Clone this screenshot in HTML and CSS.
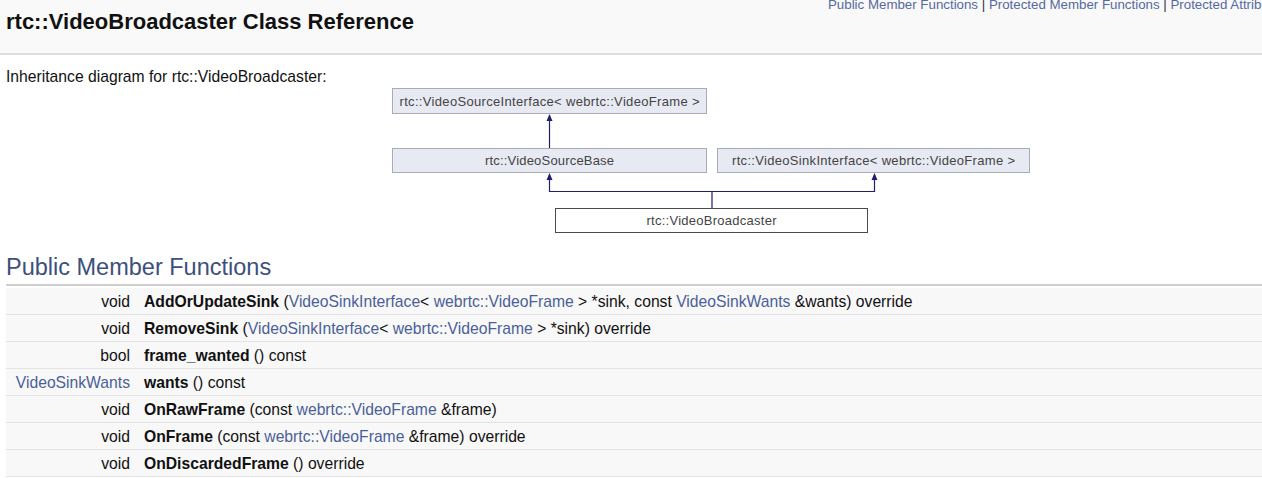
FILE: index.html
```html
<!DOCTYPE html>
<html lang="en">
<head>
<meta charset="utf-8">
<title>rtc::VideoBroadcaster Class Reference</title>
<link rel="stylesheet" href="styles.css">
</head>
<body>
<div class="header">
  <div class="headertitle"><div class="title">rtc::VideoBroadcaster Class Reference</div></div>
  <div class="summary"><a class="el">Public Member Functions</a> | <a class="el">Protected Member Functions</a> | <a class="el">Protected Attributes</a></div>
</div>
<div class="contents">
  <p class="inherit-label">Inheritance diagram for rtc::VideoBroadcaster:</p>
  <div class="diagram">
    <svg width="660" height="158" viewBox="386 86 660 158" xmlns="http://www.w3.org/2000/svg">
      <g class="box">
        <rect x="392.5" y="88.5" width="314" height="25"/>
        <rect x="392.5" y="148.5" width="314" height="24"/>
        <rect x="717.5" y="148.5" width="312" height="24"/>
      </g>
      <rect class="box-self" x="555.5" y="208.5" width="312" height="24"/>
      <g class="edges">
        <path d="M549.5 148 V120"/>
        <path d="M712 208 V191.5 M549 191.5 H875 M549.5 192 V179 M874.5 192 V179"/>
      </g>
      <g class="heads">
        <polygon points="549.5,114 546.5,121 552.5,121"/>
        <polygon points="549.5,173 546.5,180 552.5,180"/>
        <polygon points="874.5,173 871.5,180 877.5,180"/>
      </g>
      <g class="labels">
        <text x="549.5" y="105.5" textLength="300" lengthAdjust="spacing">rtc::VideoSourceInterface&lt; webrtc::VideoFrame &gt;</text>
        <text x="549.5" y="165" textLength="129" lengthAdjust="spacing">rtc::VideoSourceBase</text>
        <text x="873.5" y="165" textLength="283" lengthAdjust="spacing">rtc::VideoSinkInterface&lt; webrtc::VideoFrame &gt;</text>
        <text x="711.5" y="225" textLength="130" lengthAdjust="spacing">rtc::VideoBroadcaster</text>
      </g>
    </svg>
  </div>
  <h2 class="groupheader">Public Member Functions</h2>
  <div class="memberdecls">
    <div class="memrow"><div class="memleft">void</div><div class="memright"><b>AddOrUpdateSink</b> (<a class="el">VideoSinkInterface</a>&lt; <a class="el">webrtc::VideoFrame</a> &gt; *sink, const <a class="el">VideoSinkWants</a> &amp;wants) override</div></div>
    <div class="memrow"><div class="memleft">void</div><div class="memright"><b>RemoveSink</b> (<a class="el">VideoSinkInterface</a>&lt; <a class="el">webrtc::VideoFrame</a> &gt; *sink) override</div></div>
    <div class="memrow"><div class="memleft">bool</div><div class="memright"><b>frame_wanted</b> () const</div></div>
    <div class="memrow"><div class="memleft"><a class="el">VideoSinkWants</a></div><div class="memright"><b>wants</b> () const</div></div>
    <div class="memrow"><div class="memleft">void</div><div class="memright"><b>OnRawFrame</b> (const <a class="el">webrtc::VideoFrame</a> &amp;frame)</div></div>
    <div class="memrow"><div class="memleft">void</div><div class="memright"><b>OnFrame</b> (const <a class="el">webrtc::VideoFrame</a> &amp;frame) override</div></div>
    <div class="memrow"><div class="memleft">void</div><div class="memright"><b>OnDiscardedFrame</b> () override</div></div>
  </div>
</div>
</body>
</html>
```
FILE: styles.css
```css
html, body {
  margin: 0;
  padding: 0;
  background: #ffffff;
  overflow: hidden;
}
body {
  font-family: "Liberation Sans", Arial, sans-serif;
  font-size: 15.7px;
  color: #111111;
}
a.el {
  color: #4a5f98;
  text-decoration: none;
}
.header {
  display: flex;
  height: 53px;
  background: #f9f9fa;
  border-bottom: 2px solid #dddddd;
  overflow: hidden;
}
.headertitle {
  flex: 0 0 828px;
  box-sizing: border-box;
  padding: 9px 0 0 6px;
}
.title {
  font-size: 22px;
  line-height: 25px;
  font-weight: bold;
  color: #111111;
}
.summary {
  flex: 0 0 auto;
  white-space: nowrap;
  font-size: 13.3px;
  line-height: 15px;
  margin-top: -3.5px;
  color: #333333;
}
.summary a.el {
  color: #5569a0;
}
.contents {
  padding-left: 6px;
}
.inherit-label {
  margin: 13px 0 0;
  line-height: 18px;
}
.diagram {
  margin-left: 380px;
  height: 158px;
}
.diagram svg {
  display: block;
}
.box rect {
  fill: #e8eaf3;
  stroke: #a9abb8;
  stroke-width: 1;
}
.box-self {
  fill: #ffffff;
  stroke: #4a4a4a;
  stroke-width: 1;
}
.edges path {
  fill: none;
  stroke: #1f1f6e;
  stroke-width: 1.2;
}
.heads polygon {
  fill: #1f1f6e;
}
.labels text {
  font-family: "Liberation Sans", Arial, sans-serif;
  font-size: 13px;
  fill: #444444;
  text-anchor: middle;
}
.groupheader {
  margin: 9.5px 0 0;
  padding-bottom: 3.5px;
  font-size: 23.5px;
  line-height: 27px;
  font-weight: normal;
  color: #3d4f7c;
  border-bottom: 2px solid #cfcfcf;
}
.memberdecls {
  margin-top: 2px;
}
.memrow {
  display: grid;
  grid-template-columns: 124px 1fr;
  height: 26px;
  line-height: 27px;
  background: #f8f8f9;
  border-bottom: 1px solid #e4e4e4;
  white-space: nowrap;
}
.memleft {
  text-align: right;
}
.memright {
  padding-left: 14px;
}
.memright b {
  font-weight: bold;
}
```
